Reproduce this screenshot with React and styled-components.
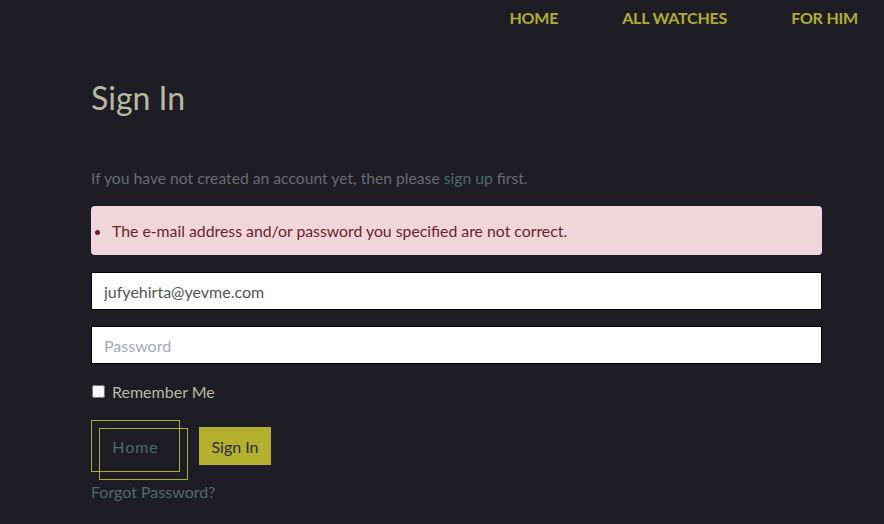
import React from "react";
import styled, { createGlobalStyle } from "styled-components";

const GlobalStyle = createGlobalStyle`
  html, body {
    margin: 0;
    padding: 0;
    background: #1e1d26;
    font-family: Lato, "Open Sans", sans-serif;
  }
  * {
    box-sizing: border-box;
  }
`;

function App() {
  return (
    <Page>
      <GlobalStyle />
      <Nav>
        <NavLink href="#">HOME</NavLink>
        <NavLink href="#">ALL WATCHES</NavLink>
        <NavLink href="#">FOR HIM</NavLink>
      </Nav>

      <Content>
        <Title>Sign In</Title>
        <Divider />
        <Intro>
          If you have not created an account yet, then please{" "}
          <a href="#">sign up</a> first.
        </Intro>

        <Alert>
          <ul>
            <li>The e-mail address and/or password you specified are not correct.</li>
          </ul>
        </Alert>

        <Form>
          <Input type="email" defaultValue="jufyehirta@yevme.com" />
          <Input type="password" placeholder="Password" />
          <Remember>
            <input type="checkbox" />
            <span>Remember Me</span>
          </Remember>

          <Buttons>
            <HomeButton>Home</HomeButton>
            <SubmitButton type="button">Sign In</SubmitButton>
          </Buttons>

          <Forgot href="#">Forgot Password?</Forgot>
        </Form>
      </Content>
    </Page>
  );
}

export default App;

const Page = styled.div`
  width: 884px;
  height: 524px;
  overflow: hidden;
  background: #1e1d26;
`;

const Nav = styled.nav`
  display: flex;
  justify-content: flex-end;
  gap: 64px;
  padding: 9px 26px 0 0;
  height: 36px;
`;

const NavLink = styled.a`
  color: #aeae2d;
  font-size: 16px;
  font-weight: 700;
  text-decoration: none;
  letter-spacing: -0.2px;
  line-height: 18px;
`;

const Content = styled.div`
  margin: 0 62px 0 91px;
`;

const Title = styled.h1`
  margin: 40px 0 0;
  font-size: 32px;
  font-weight: 400;
  line-height: 44px;
  color: #b9b8a0;
`;

const Divider = styled.hr`
  margin: 20px 0 0;
  border: none;
  border-top: 1px solid #1b1a22;
`;

const Intro = styled.p`
  margin: 27px 0 0;
  font-size: 15.7px;
  line-height: 20px;
  color: #6b6b70;

  a {
    color: #4d6b69;
    text-decoration: none;
  }
`;

const Alert = styled.div`
  margin-top: 18px;
  height: 49px;
  background: #f0d6d9;
  border-radius: 4px;
  display: flex;
  align-items: center;

  ul {
    margin: 0;
    padding-left: 21px;
  }

  li {
    font-size: 15.8px;
    color: #6a1f2e;
    line-height: 20px;
  }
`;

const Form = styled.form`
  display: flex;
  flex-direction: column;
  margin-top: 17px;
`;

const Input = styled.input`
  height: 38px;
  width: 100%;
  border: 1px solid #000;
  background: #fff;
  padding: 0 12px;
  font-family: Lato, sans-serif;
  font-size: 16px;
  color: #555;
  margin-bottom: 16px;
  outline: none;

  &::placeholder {
    color: #a6aab8;
  }
`;

const Remember = styled.label`
  display: flex;
  align-items: center;
  gap: 7px;
  margin-top: 2px;
  font-size: 16px;
  color: #b9b8a0;

  input {
    width: 13px;
    height: 13px;
    margin: 0 0 0 1px;
  }
`;

const Buttons = styled.div`
  display: flex;
  align-items: flex-start;
  gap: 19px;
  margin-top: 19px;
`;

const HomeButton = styled.a`
  position: relative;
  width: 89px;
  height: 52px;
  border: 1px solid #aeae2d;
  display: flex;
  align-items: center;
  justify-content: center;
  font-size: 16px;
  letter-spacing: 1px;
  color: #4d6b69;

  &::after {
    content: "";
    position: absolute;
    left: 7px;
    top: 7px;
    width: 87px;
    height: 50px;
    border: 1px solid #aeae2d;
  }
`;

const SubmitButton = styled.button`
  margin-top: 7px;
  width: 72px;
  height: 38px;
  border: none;
  background: #b2b02e;
  color: #2a2a24;
  font-family: Lato, sans-serif;
  font-size: 16px;
  padding: 0;
`;

const Forgot = styled.a`
  margin-top: 10px;
  font-size: 16px;
  color: #4d6b69;
  text-decoration: none;
  align-self: flex-start;
`;
